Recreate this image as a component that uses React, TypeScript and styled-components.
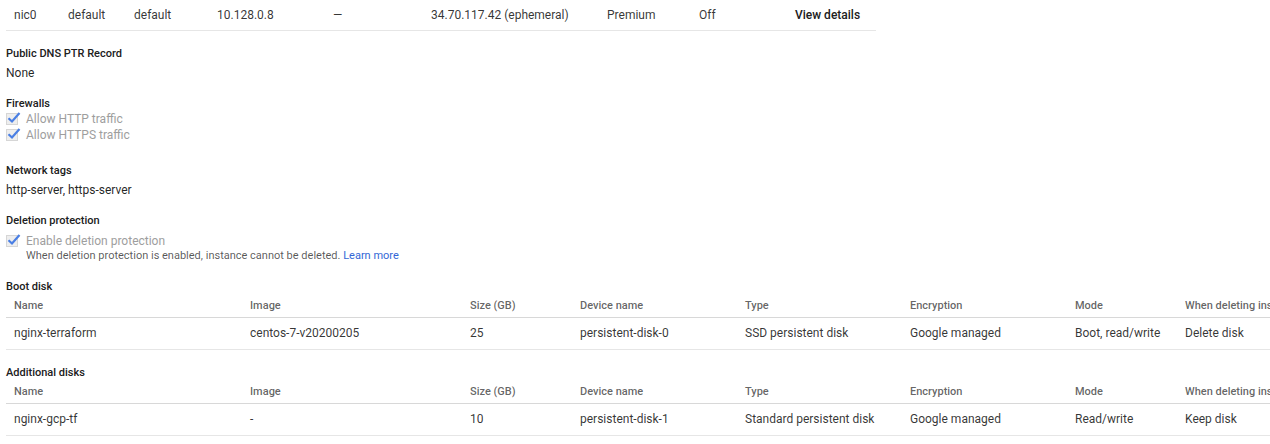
import React from "react";
import styled, { createGlobalStyle } from "styled-components";

const Global = createGlobalStyle`
  html, body { margin: 0; padding: 0; background: #fff; }
  body {
    font-family: Roboto, "Noto Sans", Arial, sans-serif;
    color: rgba(0,0,0,0.87);
    -webkit-font-smoothing: antialiased;
    overflow: hidden;
  }
`;

const Page = styled.div`
  width: 1270px;
  height: 444px;
  overflow: hidden;
  padding-left: 6px;
  box-sizing: border-box;
`;

const NicTable = styled.div`
  width: 870px;
  display: grid;
  grid-template-columns: 54px 66px 83px 116px 98px 176px 92px 96px 80px;
  height: 30px;
  border-bottom: 1px solid #e6e6e6;
  align-items: center;
  font-size: 12px;
  color: rgba(0,0,0,0.8);
`;

const Cell = styled.div<{ $strong?: boolean }>`
  padding-left: 8px;
  white-space: nowrap;
  font-weight: ${(p) => (p.$strong ? 500 : 400)};
  color: ${(p) => (p.$strong ? "#202020" : "inherit")};
  line-height: 28px;
`;

const Section = styled.div<{ $top: number }>`
  margin-top: ${(p) => p.$top}px;
`;

const Label = styled.div<{ $gap?: number }>`
  font-size: 11px;
  font-weight: 500;
  line-height: 16px;
  color: #202020;
  margin-bottom: ${(p) => p.$gap ?? 2}px;
`;

const Value = styled.div`
  font-size: 12px;
  line-height: 20px;
  color: rgba(0,0,0,0.87);
`;

const CheckRow = styled.div`
  display: flex;
  align-items: center;
  gap: 8px;
  height: 16px;
  font-size: 12px;
  color: #9e9e9e;
`;

const Box = styled.span`
  position: relative;
  width: 12px;
  height: 12px;
  border: 1px solid #d6d6d6;
  background: #eeeeee;
  box-sizing: border-box;
  flex: none;
  svg {
    position: absolute;
    left: -1px;
    top: -4px;
  }
`;

const Help = styled.div`
  font-size: 11px;
  line-height: 14px;
  color: rgba(0,0,0,0.66);
  padding-left: 20px;
`;

const Link = styled.a`
  color: #3367d6;
  text-decoration: none;
`;

const DiskTable = styled.div`
  width: 1400px;
`;

const DiskRow = styled.div<{ $head?: boolean }>`
  display: grid;
  grid-template-columns: 236px 220px 110px 165px 165px 165px 110px 220px;
  align-items: center;
  height: ${(p) => (p.$head ? 23 : 31)}px;
  border-bottom: 1px solid ${(p) => (p.$head ? "#d8d8d8" : "#e6e6e6")};
  font-size: ${(p) => (p.$head ? 11 : 12)}px;
  font-weight: ${(p) => (p.$head ? 500 : 400)};
  color: ${(p) => (p.$head ? "rgba(0,0,0,0.62)" : "rgba(0,0,0,0.8)")};
`;

const DCell = styled.div<{ $head?: boolean }>`
  padding-left: 8px;
  white-space: nowrap;
  line-height: 16px;
  padding-bottom: ${(p) => (p.$head ? 0 : 2)}px;
`;

const Check = () => (
  <Box>
    <svg width="16" height="14" viewBox="0 0 16 14">
      <path d="M2.5 8.2 L6 11.5 L13.5 3" fill="none" stroke="#4a7fe4" strokeWidth="2.2" />
    </svg>
  </Box>
);

const heads = ["Name", "Image", "Size (GB)", "Device name", "Type", "Encryption", "Mode", "When deleting instance"];

const Disk = ({ cells }: { cells: string[] }) => (
  <DiskTable>
    <DiskRow $head>
      {heads.map((h) => (
        <DCell key={h} $head>
          {h}
        </DCell>
      ))}
    </DiskRow>
    <DiskRow>
      {cells.map((c, i) => (
        <DCell key={i}>{c}</DCell>
      ))}
    </DiskRow>
  </DiskTable>
);

export default function App() {
  return (
    <Page>
      <Global />
      <NicTable>
        <Cell>nic0</Cell>
        <Cell>default</Cell>
        <Cell>default</Cell>
        <Cell>10.128.0.8</Cell>
        <Cell>—</Cell>
        <Cell>34.70.117.42 (ephemeral)</Cell>
        <Cell>Premium</Cell>
        <Cell>Off</Cell>
        <Cell $strong>View details</Cell>
      </NicTable>

      <Section $top={15}>
        <Label $gap={1}>Public DNS PTR Record</Label>
        <Value>None</Value>
      </Section>

      <Section $top={13}>
        <Label $gap={-1}>Firewalls</Label>
        <CheckRow>
          <Check />
          Allow HTTP traffic
        </CheckRow>
        <CheckRow>
          <Check />
          Allow HTTPS traffic
        </CheckRow>
      </Section>

      <Section $top={20}>
        <Label $gap={1}>Network tags</Label>
        <Value>http-server, https-server</Value>
      </Section>

      <Section $top={13}>
        <Label $gap={4}>Deletion protection</Label>
        <CheckRow>
          <Check />
          Enable deletion protection
        </CheckRow>
        <Help>
          When deletion protection is enabled, instance cannot be deleted. <Link>Learn more</Link>
        </Help>
      </Section>

      <Section $top={16}>
        <Label $gap={-1}>Boot disk</Label>
        <Disk
          cells={[
            "nginx-terraform",
            "centos-7-v20200205",
            "25",
            "persistent-disk-0",
            "SSD persistent disk",
            "Google managed",
            "Boot, read/write",
            "Delete disk",
          ]}
        />
      </Section>

      <Section $top={15}>
        <Label $gap={-1}>Additional disks</Label>
        <Disk
          cells={[
            "nginx-gcp-tf",
            "-",
            "10",
            "persistent-disk-1",
            "Standard persistent disk",
            "Google managed",
            "Read/write",
            "Keep disk",
          ]}
        />
      </Section>
    </Page>
  );
}
